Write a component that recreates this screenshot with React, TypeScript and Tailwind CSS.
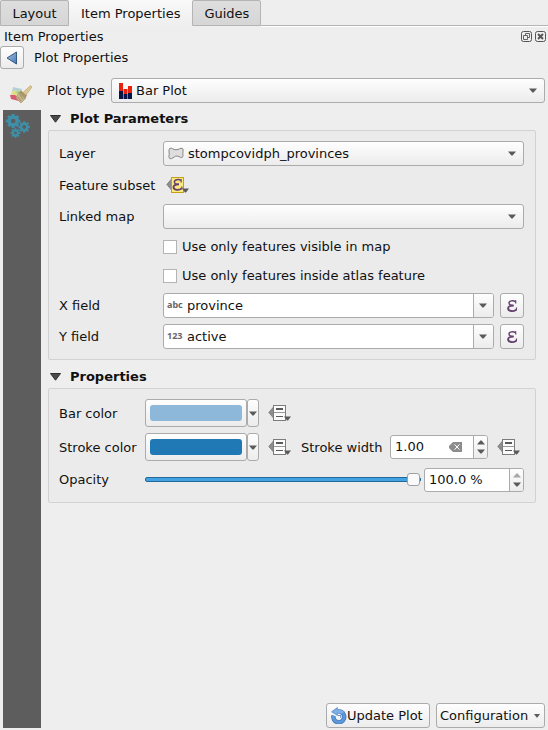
import { useState, type ReactNode } from "react";
import clsx from "clsx";

const raised =
  "rounded-[3px] border border-[#ababab] bg-linear-to-b from-[#fefefe] to-[#ececec]";

function Caret({ up = false, faded = false }: { up?: boolean; faded?: boolean }) {
  return (
    <svg
      viewBox="0 0 8 5"
      className={clsx("h-[5px] w-2", up && "rotate-180", faded && "opacity-50")}
      aria-hidden="true"
    >
      <path d="M0 0.5H8L4.6 4.5H3.4Z" fill="#5a5a5a" />
    </svg>
  );
}

function BackIcon() {
  return (
    <svg viewBox="0 0 12 14" className="h-[14px] w-3" aria-hidden="true">
      <defs>
        <linearGradient id="back" x1="0" y1="0" x2="1" y2="1">
          <stop offset="0" stopColor="#a9c5e6" />
          <stop offset="1" stopColor="#4377b4" />
        </linearGradient>
      </defs>
      <path d="M10.5 1V13L1 7Z" fill="url(#back)" stroke="#36597f" strokeLinejoin="round" />
    </svg>
  );
}

function BrushIcon() {
  return (
    <svg viewBox="0 0 24 20" className="h-5 w-6" aria-hidden="true">
      <path d="M4 3L13 5L12 9L3 8Z" fill="#b4d0dc" />
      <path d="M3 7L9 6L14 8L9 14L2 11Z" fill="#dfe08b" />
      <path d="M8 6L13 7L11 10L6 9Z" fill="#b3d59a" />
      <path d="M1 11L6 11L10 14L13 18L10 17L2 15Z" fill="#dc5a70" />
      <path d="M10 8L17 14L12 19L7 14Z" fill="#c8b48a" stroke="#a38f62" strokeWidth="0.6" />
      <path d="M9 13L12 17M11 11L14 15" stroke="#93815c" strokeWidth="0.7" />
      <path d="M12 6.5L18 11.5L16 14.5L9.5 9Z" fill="#a8966b" />
      <path d="M14 8.5L21.5 1.5L23 3L17 11Z" fill="#dfc891" stroke="#b29b68" strokeWidth="0.6" />
    </svg>
  );
}

function Gear({ x, y, r, hole, tooth }: { x: number; y: number; r: number; hole: number; tooth: number }) {
  return (
    <g transform={`translate(${x} ${y})`}>
      <circle r={(r + hole) / 2} fill="none" stroke="#3f8fa9" strokeWidth={r - hole} />
      {[0, 45, 90, 135, 180, 225, 270, 315].map((angle) => (
        <rect
          key={angle}
          x={-tooth / 2}
          y={-r - 1.4}
          width={tooth}
          height="2.2"
          fill="#3f8fa9"
          transform={`rotate(${angle})`}
        />
      ))}
    </g>
  );
}

function GearsIcon() {
  return (
    <svg viewBox="0 0 26 25" className="h-[25px] w-[26px]" aria-hidden="true">
      <Gear x={8.2} y={8} r={5.7} hole={2.3} tooth={3} />
      <Gear x={19.2} y={14} r={4.3} hole={1.9} tooth={2.4} />
      <Gear x={10.5} y={20} r={3.4} hole={1.4} tooth={2} />
    </svg>
  );
}

function BarPlotIcon() {
  return (
    <svg viewBox="0 0 13 16" className="h-4 w-[13px]" aria-hidden="true">
      <path d="M0 0H4V8H0ZM4.5 6H8.5V11H4.5ZM9 3H13V10H9Z" fill="#e8220c" />
      <path d="M0 8H4V16H0ZM4.5 11H8.5V16H4.5ZM9 10H13V16H9Z" fill="#06144a" />
    </svg>
  );
}

function PolygonIcon() {
  return (
    <svg viewBox="0 0 16 13" className="h-[13px] w-4" aria-hidden="true">
      <path
        d="M1.6 1.5C3.8 0.2 5 2.8 8 2.8C11 2.8 12.4 0.4 14.6 1.5C16 3.3 14.2 5.6 15 8.4C15.3 10.6 13.2 11.2 11 9.6C8.4 8.4 7 9.2 5 10.8C2.8 12.4 0.9 12 0.9 9.6C2 6.6 0 3.4 1.6 1.5Z"
        fill="#dedede"
        stroke="#858585"
      />
    </svg>
  );
}

function EpsilonStroke() {
  return (
    <g fill="none" stroke="#64406f">
      <path d="M8.4 1.5C6.6 0.5 2 0.3 2 3.1C2 4.9 3.6 5.4 6.6 5.4" strokeWidth="1.5" />
      <path d="M6.6 5.6C3 5.5 1.1 6.6 1.1 8.3C1.1 11.8 7 11.7 9.2 9.6" strokeWidth="1.9" />
      <path d="M8.7 0.3V3.6M9.5 7.6V10.4" strokeWidth="1.2" />
    </g>
  );
}

function OverrideIcon({ expression = false }: { expression?: boolean }) {
  return (
    <svg viewBox="0 0 24 18" className="h-[18px] w-6" aria-hidden="true">
      <path d="M5.5 3V14L0.8 8.5Z" fill="#8e8e8e" stroke="#767676" strokeWidth="0.8" />
      {expression ? (
        <>
          <rect x="5.5" y="1.5" width="12" height="15" fill="#fbe87f" stroke="#c5a012" />
          <g transform="translate(6.4 2.8)">
            <EpsilonStroke />
          </g>
        </>
      ) : (
        <>
          <rect x="5.5" y="1.5" width="12" height="15" fill="#fbfbfb" stroke="#7c7c7c" />
          <path d="M6 8.5H17" stroke="#999" />
          <path d="M8 5H15" stroke="#5a5a5a" strokeWidth="2" />
          <path d="M8 12.5H15" stroke="#5a5a5a" />
        </>
      )}
      <path d="M16 12.5H23L20 16.5H19Z" fill="#5a5a5a" />
    </svg>
  );
}

function RefreshIcon() {
  return (
    <svg viewBox="0 0 16 17" className="h-[17px] w-4 shrink-0" aria-hidden="true">
      <path d="M2.6 8.6A5.4 5.4 0 1 0 10 5" fill="none" stroke="#3a72b8" strokeWidth="4.4" />
      <path d="M2.6 8.6A5.4 5.4 0 1 0 10 5" fill="none" stroke="#5f98da" strokeWidth="3" />
      <path d="M0.6 4.8L6.4 0.6V2.6C10 2 12.4 3.4 13.6 5.4L10.6 7L6.4 6V8.4Z" fill="#7fafe4" stroke="#4b82c4" strokeWidth="0.7" />
      <path d="M7 8.5H9.8V11" fill="none" stroke="#4b82c4" strokeWidth="0.9" />
    </svg>
  );
}

function ClearIcon() {
  return (
    <svg viewBox="0 0 13 10" className="h-[10px] w-[13px]" aria-hidden="true">
      <path d="M4 0H13V10H4L0 6V4Z" fill="#8c8c8c" />
      <path d="M5.5 2.3L10.5 7.7M10.5 2.3L5.5 7.7" stroke="#fff" />
    </svg>
  );
}

function Combo({
  id,
  options,
  icon,
  editable = false,
}: {
  id: string;
  options: string[];
  icon?: ReactNode;
  editable?: boolean;
}) {
  return (
    <div className="relative h-[25px] min-w-0 flex-1">
      <select
        id={id}
        className={clsx(
          "h-full w-full appearance-none pr-6",
          icon ? (editable ? "pl-[23px]" : "pl-6") : "pl-2",
          editable ? "rounded-[3px] border border-[#ababab] bg-white" : raised,
        )}
      >
        {options.map((option) => (
          <option key={option}>{option}</option>
        ))}
      </select>
      {icon && (
        <span className="pointer-events-none absolute inset-y-0 left-[3px] flex items-center">{icon}</span>
      )}
      <span
        className={clsx(
          "pointer-events-none absolute inset-y-px right-px flex items-center justify-center",
          editable
            ? "w-5 rounded-r-[2px] border-l border-[#ababab] bg-linear-to-b from-[#fefefe] to-[#ececec] pr-[2px]"
            : "w-[22px]",
        )}
      >
        <Caret />
      </span>
    </div>
  );
}

function FieldRow({ id, label, type, value }: { id: string; label: string; type: string; value: string }) {
  return (
    <div className="flex h-[25px] items-center">
      <label htmlFor={id} className="w-[104px] shrink-0">{label}</label>
      <Combo
        id={id}
        options={[value]}
        editable
        icon={<span className="pl-px pb-[2px] font-['Noto_Sans',sans-serif] text-[9px] font-bold text-[#666]">{type}</span>}
      />
      <button
        type="button"
        aria-label={`${label} expression`}
        className={clsx(raised, "ml-1.5 flex h-[25px] w-6 items-center justify-center")}
      >
        <svg viewBox="0 0 10 12" className="h-3 w-[10px]" aria-hidden="true">
          <EpsilonStroke />
        </svg>
      </button>
    </div>
  );
}

function Check({ label }: { label: string }) {
  return (
    <label className="ml-[104px] flex h-[23px] items-center gap-[5px]">
      <input
        type="checkbox"
        className="size-[14px] shrink-0 appearance-none border border-[#b4b4b4] bg-white checked:bg-[#3d9fdc]"
      />
      {label}
    </label>
  );
}

function Section({ title, children }: { title: string; children: ReactNode }) {
  return (
    <section>
      <h2 className="flex h-5 items-center pb-[2px] font-bold">
        <button type="button" className="flex items-center gap-[9px] pl-[2px]">
          <svg viewBox="0 0 11 8" className="h-2 w-[11px]" aria-hidden="true">
            <path d="M0.5 0.5H10.5L5.5 7.2Z" fill="#4a4a4a" stroke="#2e2e2e" strokeLinejoin="round" />
          </svg>
          {title}
        </button>
      </h2>
      <div className="mr-3 flex flex-col gap-1.5 rounded-[2px] border border-[#d2d2d2] bg-[#ebebeb] py-[10px] pr-[11px] pl-[10px]">
        {children}
      </div>
    </section>
  );
}

function ColorButton({ label, swatch }: { label: string; swatch: string }) {
  return (
    <div className="flex h-7 shrink-0">
      <button type="button" aria-label={label} className={clsx(raised, "flex w-[102px] items-center px-1")}>
        <span className={clsx("h-4 w-full rounded-[3px]", swatch)} />
      </button>
      <button
        type="button"
        aria-label={`${label} options`}
        className={clsx(raised, "flex w-3 items-center justify-center")}
      >
        <Caret />
      </button>
    </div>
  );
}

function OverrideButton({ label, expression }: { label: string; expression?: boolean }) {
  return (
    <button type="button" aria-label={label} className="shrink-0">
      <OverrideIcon expression={expression} />
    </button>
  );
}

function Spin({
  id,
  label,
  initial,
  clearable = false,
  atMax = false,
  className,
}: {
  id: string;
  label?: string;
  initial: string;
  clearable?: boolean;
  atMax?: boolean;
  className: string;
}) {
  const [value, setValue] = useState(initial);
  return (
    <div
      className={clsx(
        "flex h-6 shrink-0 overflow-hidden rounded-[3px] border border-[#ababab] bg-white",
        className,
      )}
    >
      <input
        id={id}
        aria-label={label}
        value={value}
        onChange={(event) => setValue(event.target.value)}
        className="min-w-0 flex-1 pl-1 outline-none"
      />
      {clearable && (
        <button type="button" aria-label="Reset" className="mr-[11px]" onClick={() => setValue(initial)}>
          <ClearIcon />
        </button>
      )}
      <div className="flex w-[14px] flex-col items-center justify-center gap-1 border-l border-[#ababab] bg-linear-to-b from-[#fefefe] to-[#ececec]">
        <button type="button" aria-label="Increase">
          <Caret up faded={atMax} />
        </button>
        <button type="button" aria-label="Decrease">
          <Caret />
        </button>
      </div>
    </div>
  );
}

function Tab({ label, active = false }: { label: string; active?: boolean }) {
  return (
    <button
      type="button"
      role="tab"
      aria-selected={active}
      className={clsx(
        "border-[#b4b4b4]",
        active
          ? "h-[27px] bg-linear-to-b from-[#f9f9f9] to-[#eeeeee] px-3"
          : "h-[26px] rounded-t-[2px] border bg-linear-to-b from-[#dedede] to-[#d6d6d6] px-[11px] pt-[2px] first:w-[69px]",
      )}
    >
      {label}
    </button>
  );
}

export default function App() {
  const [opacity, setOpacity] = useState(100);
  return (
    <div className="flex min-h-screen flex-col bg-[#eeeeee] pb-[2px] font-['DejaVu_Sans',sans-serif] text-[13px] leading-4 text-[#111]">
      <div role="tablist" className="flex h-[27px] items-start">
        <Tab label="Layout" />
        <Tab label="Item Properties" active />
        <Tab label="Guides" />
        <div className="h-[27px] flex-1 border-b border-white">
          <div className="h-[26px] border-b border-[#b4b4b4]" />
        </div>
      </div>

      <header className="flex h-[19px] items-center justify-between pr-[2px] pl-1">
        <h1>Item Properties</h1>
        <div className="flex gap-[3px]">
          <button type="button" aria-label="Float panel">
            <svg viewBox="0 0 11 11" className="size-[11px]" fill="none" stroke="#555" aria-hidden="true">
              <rect x="0.5" y="0.5" width="10" height="10" rx="2" />
              <path d="M4.5 4V2.5H8.5V6.5H7M2.5 4.5H6.5V8.5H2.5Z" strokeWidth="0.9" />
            </svg>
          </button>
          <button type="button" aria-label="Close panel">
            <svg viewBox="0 0 11 11" className="size-[11px]" fill="none" stroke="#555" aria-hidden="true">
              <rect x="0.5" y="0.5" width="10" height="10" rx="2" />
              <path d="M3 3L8 8M8 3L3 8" strokeWidth="1.9" />
            </svg>
          </button>
        </div>
      </header>

      <div className="flex h-6 items-start gap-[10px]">
        <button
          type="button"
          aria-label="Back"
          className={clsx(raised, "flex h-[23px] w-6 items-center justify-center")}
        >
          <BackIcon />
        </button>
        <span className="leading-6">Plot Properties</span>
      </div>

      <div className="flex flex-1">
        <nav className="ml-[3px] flex w-[38px] shrink-0 flex-col">
          <button type="button" aria-label="Style" className="flex h-10 items-end pb-1.5 pl-1.5">
            <BrushIcon />
          </button>
          <div className="flex-1 bg-[#5d5d5d]">
            <button type="button" aria-label="Settings" className="mt-[3px] ml-[2px] block">
              <GearsIcon />
            </button>
          </div>
        </nav>

        <main className="flex min-w-0 flex-1 flex-col pl-[7px]">
          <div className="-ml-px flex h-10 items-center pt-[1px] pr-[3px]">
            <label htmlFor="plot-type" className="w-16 shrink-0">Plot type</label>
            <Combo
              id="plot-type"
              options={["Bar Plot"]}
              icon={<span className="pl-[5px]"><BarPlotIcon /></span>}
            />
          </div>

          <Section title="Plot Parameters">
            <div className="flex items-center">
              <label htmlFor="layer" className="w-[104px] shrink-0">Layer</label>
              <Combo
                id="layer"
                options={["stompcovidph_provinces"]}
                icon={<span className="pl-[2px]"><PolygonIcon /></span>}
              />
            </div>
            <div className="flex h-[26px] items-center">
              <span className="w-[107px] shrink-0 pt-px">Feature subset</span>
              <OverrideButton label="Feature subset expression" expression />
            </div>
            <div className="flex items-center">
              <label htmlFor="linked-map" className="w-[104px] shrink-0">Linked map</label>
              <Combo id="linked-map" options={[""]} />
            </div>
            <Check label="Use only features visible in map" />
            <Check label="Use only features inside atlas feature" />
            <FieldRow id="x-field" label="X field" type="abc" value="province" />
            <FieldRow id="y-field" label="Y field" type="123" value="active" />
          </Section>

          <div className="mt-2">
            <Section title="Properties">
              <div className="flex items-center">
                <span className="w-[86px] shrink-0 pt-px">Bar color</span>
                <ColorButton label="Bar color" swatch="bg-[#8db8d9]" />
                <span className="w-[9px]" />
                <OverrideButton label="Bar color override" />
              </div>
              <div className="flex items-center">
                <span className="w-[86px] shrink-0 pt-px">Stroke color</span>
                <ColorButton label="Stroke color" swatch="bg-[#2078b4]" />
                <span className="w-[9px]" />
                <OverrideButton label="Stroke color override" />
                <label htmlFor="stroke-width" className="ml-[9px] flex-1 pt-px whitespace-nowrap">Stroke width</label>
                <Spin id="stroke-width" initial="1.00" clearable className="w-[98px]" />
                <span className="w-[9px]" />
                <OverrideButton label="Stroke width override" />
                <span className="w-[3px]" />
              </div>
              <div className="flex h-[25px] items-center">
                <label htmlFor="opacity" className="w-[86px] shrink-0">Opacity</label>
                <input
                  id="opacity"
                  type="range"
                  min="0"
                  max="100"
                  value={opacity}
                  onChange={(event) => setOpacity(Number(event.target.value))}
                  className="mr-[3px] h-4 min-w-0 flex-1 appearance-none bg-transparent [&::-webkit-slider-runnable-track]:h-[5px] [&::-webkit-slider-runnable-track]:rounded-[2px] [&::-webkit-slider-runnable-track]:border [&::-webkit-slider-runnable-track]:border-[#22699b] [&::-webkit-slider-runnable-track]:bg-[#43a3e2] [&::-webkit-slider-thumb]:-mt-[5px] [&::-webkit-slider-thumb]:size-[13px] [&::-webkit-slider-thumb]:appearance-none [&::-webkit-slider-thumb]:rounded-[3px] [&::-webkit-slider-thumb]:border [&::-webkit-slider-thumb]:border-[#a0a0a0] [&::-webkit-slider-thumb]:bg-[#fafafa]"
                />
                <Spin id="opacity-value" label="Opacity percent" initial="100.0 %" atMax className="w-[100px]" />
              </div>
            </Section>
          </div>

          <footer className="mt-auto flex justify-end gap-1.5 pr-[3px]">
            <button type="button" className={clsx(raised, "flex h-[25px] w-[104px] items-center pl-1 whitespace-nowrap")}>
              <RefreshIcon />
              Update Plot
            </button>
            <button
              type="button"
              className={clsx(raised, "flex h-[25px] w-[109px] items-center justify-between pr-1 pl-[3px] whitespace-nowrap")}
            >
              Configuration
              <svg viewBox="0 0 6 4" className="h-1 w-1.5" aria-hidden="true">
                <path d="M0 0H6L3.4 3.5H2.6Z" fill="#5a5a5a" />
              </svg>
            </button>
          </footer>
        </main>
      </div>
    </div>
  );
}
